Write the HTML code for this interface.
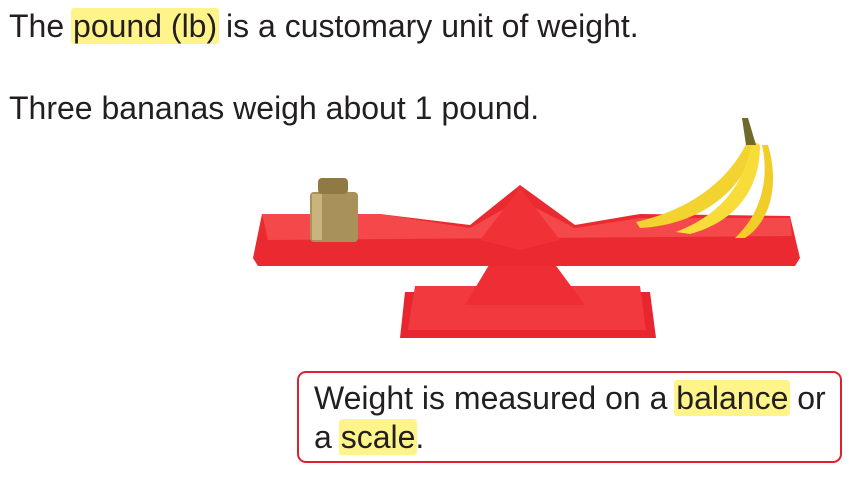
<!DOCTYPE html>
<html><head><style>
body{margin:0;width:859px;height:479px;background:#fff;position:relative;overflow:hidden;font-family:"Liberation Sans",Arial,sans-serif;color:#231f20}
.t{position:absolute;left:9px;font-size:32px;white-space:nowrap}
.h{background:#fff48a;border-radius:3px;padding:0 2px;margin:0 -2px}
.box{position:absolute;left:297px;top:371px;width:541px;height:88px;border:2px solid #e0202e;border-radius:9px}
.bt{position:absolute;left:15px;font-size:32px;white-space:nowrap}
</style></head><body>
<div class="t" style="top:8px">The <span class="h">pound (lb)</span> is a customary unit of weight.</div>
<div class="t" style="top:90px">Three bananas weigh about 1 pound.</div>
<svg style="position:absolute;left:0;top:0" width="859" height="479">
<polygon points="405,292 650,292 656,338 400,338" fill="#e8262f"/>
<polygon points="415,286 640,286 646,330 408,330" fill="#f23a3e"/>
<polygon points="495,255 548,255 585,305 465,305" fill="#ee2e34"/>
<polygon points="262,214 380,214 470,225 520,185 575,225 640,214 790,216 800,258 795,266 258,266 253,258" fill="#ea2a30"/>
<polygon points="262,214 380,214 470,228 520,200 575,228 640,218 790,218 792,236 268,240" fill="#f5484a"/>
<polygon points="480,240 520,188 560,240 520,250" fill="#f03236"/>
<rect x="310" y="192" width="48" height="50" rx="4" fill="#a8925a"/>
<rect x="318" y="178" width="30" height="16" rx="4" fill="#8f7a44"/>
<rect x="312" y="194" width="10" height="46" fill="#c8b47c"/>
<path d="M636,222 C690,210 730,180 748,140 L754,145 C745,190 700,225 640,228 Z" fill="#f3d330"/>
<path d="M676,232 C720,215 745,185 752,140 L760,145 C760,190 735,222 690,234 Z" fill="#f8dc3a"/>
<path d="M735,238 C760,215 770,180 762,145 L768,145 C780,185 770,222 745,238 Z" fill="#f1cd2a"/>
<path d="M742,118 L748,118 L756,145 L746,145 Z" fill="#6f6a2a"/>
</svg>
<div class="box">
<div class="bt" style="top:7px">Weight is measured on a <span class="h">balance</span> or</div>
<div class="bt" style="top:46px">a <span class="h">scale</span>.</div>
</div>
</body></html>
